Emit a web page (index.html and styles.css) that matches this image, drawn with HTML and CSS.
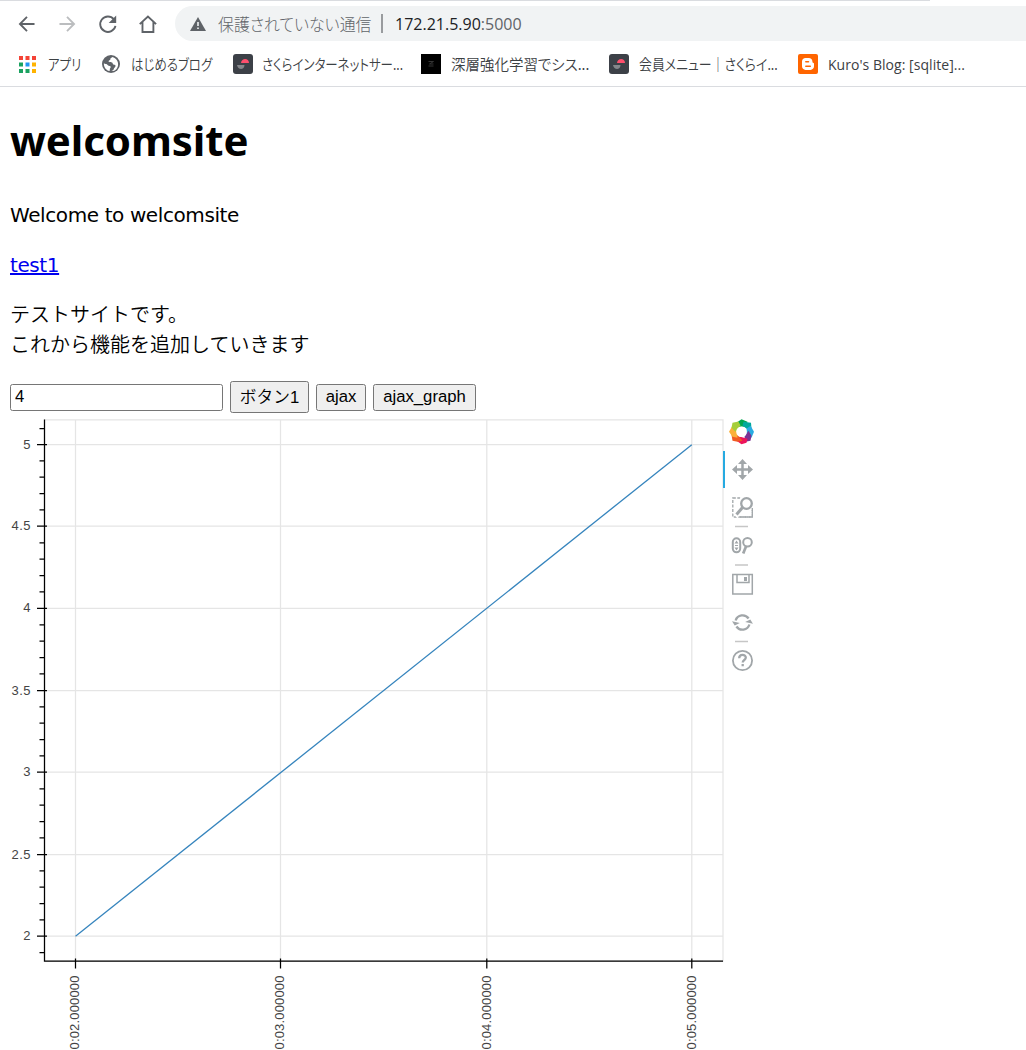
FILE: index.html
```html
<!DOCTYPE html>
<html lang="ja">
<head>
<meta charset="utf-8">
<title>welcomsite</title>
<link rel="stylesheet" href="styles.css">
</head>
<body>
<header class="browser">
  <div class="tab-edge"></div>
  <div class="toolbar">
    <svg class="nav" viewBox="0 0 24 24"><path d="M20 12H5M12 4.5L4.5 12l7.5 7.5"/></svg>
    <svg class="nav nav-off" viewBox="0 0 24 24"><path d="M4 12h15M12 4.5l7.5 7.5-7.5 7.5"/></svg>
    <svg class="nav" viewBox="0 0 24 24"><path d="M19.3 7A8.2 8.2 0 1 0 21 14"/><path class="solid" d="M21.8 3v8h-8z"/></svg>
    <svg class="nav" viewBox="0 0 24 24"><path d="M4.3 12.2L13 4l8.700 8.200M7.200 10v10.500h11.600V10"/></svg>
    <div class="omnibox">
      <svg class="warn" viewBox="0 0 16 14"><path fill="#5f6368" d="M8 0l8 14H0z"/><path stroke="#f1f3f4" stroke-width="1.6" d="M8 5v4M8 10.5v1.6"/></svg>
      <span class="security">保護されていない通信</span><i class="divider"></i>
      <span class="url">172.21.5.90<em>:5000</em></span>
    </div>
  </div>
  <nav class="bookmarks">
    <a class="bm bm-apps"><svg width="17" height="17" viewBox="0 0 17 17"><path fill="#f44336" d="M0 0h4v4H0zM6.5 0h4v4h-4zM13 0h4v4h-4z"/><path fill="#1aa260" d="M0 6.5h4v4H0zM0 13h4v4H0zM6.5 13h4v4h-4z"/><path fill="#2196f3" d="M6.5 6.5h4v4h-4z"/><path fill="#ffb300" d="M13 6.5h4v4h-4zM13 13h4v4h-4z"/></svg><span class="l-apps">アプリ</span></a>
    <a class="bm bm-blog"><svg width="18" height="18" viewBox="0 0 18 18"><circle cx="9" cy="9" r="9" fill="#5f6368"/><path fill="#fff" d="M10.5 2.1c-1 .9-2.2.8-2.1 2.1.1 1-1.5.8-1.8 2 0 1.3 2.8.7 3.6 1.4.7.8.4 2 1.6 2.1 1.4 0 2.1.5 1.6 1.8-.5 1-1.4 1.3-1.6 2.5-.2 1-1.4 1.5-2.5 2.1 4 .2 7-3 6.8-7.2-.2-3.3-2.5-6-5.6-6.8zM1.9 8.2c-.3 4 2.3 7.2 5.6 7.8.8-1-.2-2.3.8-3.1.9-.8.5-2-.7-2-1.3 0-1.8-.8-2.5-1.5-.8-.8-2-.2-3.2-1.2z"/></svg><span class="l-blog">はじめるブログ</span></a>
    <a class="bm bm-sakura"><svg width="20" height="20" viewBox="0 0 20 20"><rect width="20" height="20" rx="3" fill="#3c4047"/><path fill="#ff4f6d" d="M8 9c.4-5.2 8-5.2 8 0z"/><path fill="#85878b" d="M4 11h7.500c0 5.200-6.700 5.200-7.500 0z"/></svg><span class="l-sakura">さくらインターネットサー...</span></a>
    <a class="bm bm-deep"><svg width="20" height="20" viewBox="0 0 20 20"><path d="M0 0h20v20H0z"/><path stroke="#343434" fill="none" d="M7.500 7.500h5l-4 2.500h4M7.500 12h5"/></svg><span class="l-deep">深層強化学習でシス...</span></a>
    <a class="bm bm-member"><svg width="20" height="20" viewBox="0 0 20 20"><rect width="20" height="20" rx="3" fill="#3c4047"/><path fill="#ff4f6d" d="M8 9c.4-5.2 8-5.2 8 0z"/><path fill="#85878b" d="M4 11h7.500c0 5.200-6.700 5.200-7.500 0z"/></svg><span class="l-member">会員メニュー｜さくらイ...</span></a>
    <a class="bm bm-kuro"><svg width="20" height="20" viewBox="0 0 20 20"><rect width="20" height="20" rx="2" fill="#ff6500"/><path fill="#fff" d="M7.5 4h3.3c2.1 0 3.6 1.5 3.6 3.5 0 1 .3 1.2 1.1 1.4.4.2.5.4.5.8v2.6c0 2-1.5 3.6-3.6 3.6H7.5C5.500 15.900 4 14.300 4 12.300V7.500C4 5.500 5.500 4 7.500 4z"/><path stroke="#ff6500" stroke-width="1.5" stroke-linecap="round" d="M7.800 7.700h2.700M7.800 12.200h4.500"/></svg><span class="l-kuro">Kuro's Blog: [sqlite]...</span></a>
  </nav>
</header>
<main class="page">
  <h1>welcomsite</h1>
  <p class="latin">Welcome to welcomsite</p>
  <p class="link"><a href="#">test1</a></p>
  <p class="intro">テストサイトです。<br>これから機能を追加していきます</p>
  <form class="controls">
    <input type="text" value="4">
    <button type="button" class="b-one">ボタン1</button>
    <button type="button" class="b-ajax">ajax</button>
    <button type="button" class="b-graph">ajax_graph</button>
  </form>
</main>
<section class="plot">
  <svg class="chart" width="724" height="631" viewBox="0 419 724 631">
    <g fill="none" stroke="#e5e5e5" stroke-width="1.25">
      <path d="M44.500 419.800H723V961H44.500z"/>
      <path d="M75.500 420v541M280.500 420v541M486.800 420v541M691.800 420v541"/>
      <path d="M44 444.500h679M44 526h679M44 608.300h679M44 690.700h679M44 772.200h679M44 854.500h679M44 936.200h679"/>
    </g>
    <path d="M75.500 936.300L691.800 444.700" stroke="#3584bd" stroke-width="1.300" fill="none"/>
    <g fill="none" stroke="#000" stroke-width="1.250">
      <path d="M44.500 419.500V961.200H723"/>
      <path d="M37 444.500h10M37 526h10M37 608.300h10M37 690.700h10M37 772.200h10M37 854.500h10M37 936.200h10"/>
      <path d="M75.500 958.500v10M280.500 958.500v10M486.800 958.500v10M691.800 958.500v10"/>
      <path d="M39.500 428.500h5M39.500 952.500h5"/>
      <path id="minor" d="M39.500 460.800h5M39.500 477.200h5M39.500 493.500h5M39.500 509.800h5"/>
      <use href="#minor" y="82"/><use href="#minor" y="164"/><use href="#minor" y="246"/><use href="#minor" y="328"/><use href="#minor" y="410"/>
    </g>
    <g class="tick" text-anchor="end">
      <text x="30.500" y="449">5</text><text x="30.500" y="530" textLength="19">4.5</text><text x="30.500" y="612">4</text><text x="30.500" y="695" textLength="19">3.5</text><text x="30.500" y="776">3</text><text x="30.500" y="859" textLength="19">2.5</text><text x="30.500" y="940">2</text>
    </g>
    <g class="tick" text-anchor="end">
      <text transform="translate(78.500 975.500) rotate(-90)" textLength="74">0:02.000000</text>
      <text transform="translate(283.500 975.500) rotate(-90)" textLength="74">0:03.000000</text>
      <text transform="translate(490.500 975.500) rotate(-90)" textLength="74">0:04.000000</text>
      <text transform="translate(695.500 975.500) rotate(-90)" textLength="74">0:05.000000</text>
    </g>
  </svg>
  <svg class="tools" width="34" height="260" viewBox="722 419 34 260" fill="none" stroke="#a1a6a9">
    <g stroke="none" transform="translate(741.500 431.800)">
      <path fill="#00a650" d="M-5-9L0-12.500 6-10 4-5-3-5z"/>
      <path fill="#00a99d" d="M2-10l7.500 1L10-3 6.500-2 1-6z"/>
      <path fill="#29abe2" d="M9-6l3.500 6L10 6 5 3 5-3z"/>
      <path fill="#7b3294" d="M7-1l3 5-1 5-5 1-1-5z"/>
      <path fill="#ed145b" d="M6 7L5 11l-5 1.500L-5 9-3 4.500z"/>
      <path fill="#f15a24" d="M1 9l-5 1-5-1-1-6 5-1z"/>
      <path fill="#fbb03b" d="M-4 6l-5-1-3.500-5L-9-6l4 3z"/>
      <path fill="#a6ce39" d="M-6 0l-4-4 1-5 6-1.200 2 4z"/>
      <circle r="5.300" fill="#fff"/>
    </g>
    <path d="M724 451v37" stroke="#26aae1" stroke-width="2"/>
    <path d="M742.500 461v17M734 469.500h17" stroke-width="2.500"/>
    <path fill="#a1a6a9" stroke="none" d="M742.500 459l4.500 5h-9zM742.500 480l4.500-5h-9zM732 469.500l5-4.500v9zM753 469.500l-5-4.500v9z"/>
    <path d="M732.800 498h19.500v19h-19.500z" stroke-width="1.300" stroke-dasharray="3 1.500"/>
    <path d="M740 498.500l1-2 12-1 .5 12-5 3-6 4-6 3-3-4z" fill="#fff" stroke="none"/>
    <circle cx="746.500" cy="503.500" r="5.300" stroke-width="2.300"/><path d="M742.500 507.500l-6 7" stroke-width="3"/>
    <path d="M752.300 508v9h-12" stroke-width="1.300" stroke-dasharray="3 1.500"/>
    <path d="M735 526.500h13M735 565h13M735 641.500h13" stroke="#c6c6c6" stroke-width="1.300"/>
    <rect x="732.800" y="538.300" width="7.400" height="14" rx="3.700" stroke-width="2"/>
    <path fill="#a1a6a9" stroke="none" d="M736.500 540.500l2 3h-4zM736.500 550.500l2-3h-4zM735 545h3v1h-3z"/>
    <circle cx="747.500" cy="542.300" r="4.300" stroke-width="2"/><path d="M746 546.500l-2.800 7" stroke-width="2.700"/>
    <path d="M732.800 574.500h19.500v19.500h-19.500zM737 574.500v8h12v-8" stroke-width="1.500"/><path fill="#a1a6a9" stroke="none" d="M744 577h3v4h-3z"/>
    <path d="M735.600 620.500a7.300 7.300 0 0 1 13-2M749.400 624.500a7.300 7.300 0 0 1-13 2" stroke-width="2.300"/>
    <path fill="#a1a6a9" stroke="none" d="M753 621.500h-8l4.500-3.500zM732 623.500h8l-4.500 3.500z" transform="rotate(12 742.500 622.500)"/>
    <circle cx="742.500" cy="660.500" r="9.600" stroke-width="1.800"/>
    <path d="M739.200 658.200c0-4.500 6.800-4.200 6.600-.4-.1 2.200-3.100 2.200-3.100 4.700M742.700 664v2.300" stroke-width="2.300"/>
  </svg>
</section>
</body>
</html>
```
FILE: styles.css
```css
body { margin: 0; height: 1050px; overflow: hidden; background: #fff; color: #000; font-family: "DejaVu Sans", "Noto Sans CJK JP", sans-serif; }
.browser { height: 86px; border-bottom: 1px solid #dadce0; }
.tab-edge { width: 930px; height: 1px; background: #dadce0; }
.toolbar { height: 45px; padding-left: 15px; display: flex; align-items: center; gap: 16px; }
.nav { width: 24px; height: 24px; flex: none; fill: none; stroke: #5f6368; stroke-width: 2; transform: scale(.94); }
.nav-off { stroke: #bbbdbf; }
.nav .solid { fill: #5f6368; stroke: none; }
.omnibox { flex: 1; height: 35px; display: flex; align-items: center; padding-left: 15px; border-radius: 18px 0 0 18px; background: #f1f3f4; white-space: nowrap; }
.warn { width: 16px; height: 14px; flex: none; }
.security { width: 153px; margin-left: 12px; color: #5f6368; font: 300 17px/34px "Noto Sans CJK JP", sans-serif; font-feature-settings: "palt"; transform: scaleX(.935); transform-origin: left; }
.divider { width: 2px; height: 19px; margin: 0 12px 0 10px; background: #999b9e; }
.url { font: 16px "Open Sans", sans-serif; color: #202124; }
.url em { font-style: normal; color: #5f6368; }
.bookmarks { height: 36px; display: flex; align-items: center; padding-left: 19px; white-space: nowrap; }
.bm { display: flex; align-items: center; flex: none; height: 24px; color: #3c4043; font: 350 15px/24px "Noto Sans CJK JP", sans-serif; font-feature-settings: "palt"; }
.bm svg { flex: none; }
.bm span { transform-origin: left; }
.bm-apps { width: 83px; gap: 12px; }
.bm-blog { width: 131px; gap: 11px; }
.bm-sakura { width: 188px; gap: 9px; }
.bm-deep { width: 188px; gap: 10px; }
.bm-member { width: 189px; gap: 10px; }
.bm-kuro { gap: 10px; }
.bm .l-apps { transform: scaleX(.83); }
.bm .l-blog { transform: scaleX(.83); }
.bm .l-sakura { transform: scaleX(.83); }
.bm .l-deep { transform: scaleX(.965); }
.bm .l-member { transform: scaleX(.86); }
.l-kuro { font: 14px "Open Sans", sans-serif; letter-spacing: .04px; }
.page { padding: 0 10px; font-size: 20px; line-height: 30px; letter-spacing: -.4px; }
h1 { margin: 0; padding-top: 23px; font: bold 42px/60px "Noto Sans", sans-serif; letter-spacing: -.1px; }
p { margin: 0; }
.latin { margin-top: 30px; }
.link { margin-top: 20px; }
.link a { color: #0000ee; text-decoration-thickness: 2px; }
.intro { margin-top: 19px; font: 350 20px/30px "Noto Sans CJK JP", sans-serif; letter-spacing: 0; }
.controls { display: flex; align-items: center; gap: 7px; height: 34px; margin-top: 21px; }
.controls input, .controls button { box-sizing: border-box; height: 27px; border: 1px solid #767676; border-radius: 2.500px; font: 16.7px "Liberation Sans", "Noto Sans CJK JP", sans-serif; color: #000; padding: 0; }
.controls input { width: 213px; padding: 0 4px; background: #fff; }
.controls button { background: #efefef; white-space: nowrap; }
.controls .b-one { width: 79px; height: 32px; padding-bottom: 2px; font-weight: 350; }
.b-ajax { width: 50px; }
.b-graph { width: 103px; }
.plot { display: flex; align-items: flex-start; height: 631px; margin-top: 5px; }
.chart { flex: none; }
.tools { flex: none; margin-left: -2px; }
.tick { font: 13px "Liberation Sans", sans-serif; fill: #444; }
```
